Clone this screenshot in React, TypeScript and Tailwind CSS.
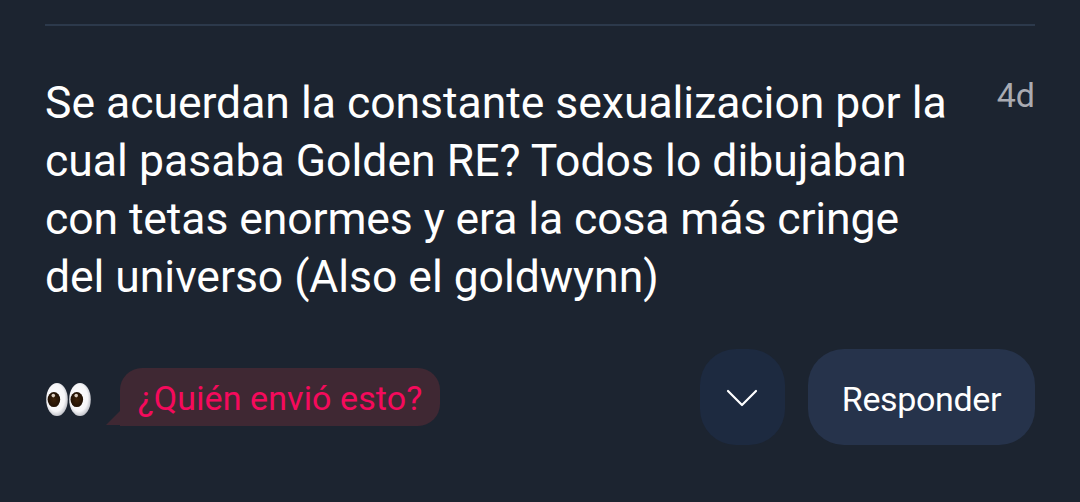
function Eyes() {
  return (
    <svg width="46" height="36" viewBox="0 0 46 36" aria-hidden="true">
      <defs>
        <radialGradient id="ball" cx="0.45" cy="0.45" r="0.58">
          <stop offset="0" stopColor="#ffffff" />
          <stop offset="0.7" stopColor="#f6f6f8" />
          <stop offset="1" stopColor="#b9bbc2" />
        </radialGradient>
        <radialGradient id="pupil" cx="0.5" cy="0.5" r="0.55">
          <stop offset="0" stopColor="#3d2209" />
          <stop offset="1" stopColor="#1e0f03" />
        </radialGradient>
      </defs>
      <ellipse cx="12" cy="17.5" rx="10.8" ry="16.6" fill="url(#ball)" />
      <ellipse cx="35" cy="17.5" rx="10.8" ry="16.6" fill="url(#ball)" />
      <ellipse cx="8.9" cy="17.6" rx="6.3" ry="7.5" fill="url(#pupil)" />
      <ellipse cx="31.8" cy="17.6" rx="6.3" ry="7.5" fill="url(#pupil)" />
      <circle cx="8.3" cy="13.6" r="1.8" fill="#d8cbbd" />
      <circle cx="31.2" cy="13.6" r="1.8" fill="#d8cbbd" />
    </svg>
  );
}

export default function App() {
  return (
    <main className="h-[502px] w-[1080px] overflow-hidden bg-[#1c2430] px-[45px] pt-6 font-[Roboto,sans-serif] text-white">
      <hr className="h-0.5 border-0 bg-[#2c394b]" />
      <div className="mt-12 flex items-start justify-between">
        <p className="text-[44.5px] leading-[58px] whitespace-nowrap">
          <span className="block tracking-[-0.03px]">Se acuerdan la constante sexualizacion por la</span>
          <span className="block tracking-[0.02px]">cual pasaba Golden RE? Todos lo dibujaban</span>
          <span className="block tracking-[-0.1px]">con tetas enormes y era la cosa más cringe</span>
          <span className="block tracking-[-0.05px]">del universo (Also el goldwynn)</span>
        </p>
        <time className="text-[34px] leading-[42px] text-[#a9abb2]">4d</time>
      </div>
      <div className="mt-[43px] flex h-24 items-center">
        <div className="flex items-center">
          <div className="pt-[5px]">
            <Eyes />
          </div>
          <div className="ml-[15px] flex items-end">
            <svg className="mb-px" width="14" height="14" viewBox="0 0 14 14" aria-hidden="true">
              <path d="M14 0V14H0Z" fill="#3f2833" />
            </svg>
            <div className="flex h-[58px] w-[320px] items-center justify-center rounded-tl-[22px] rounded-r-[22px] bg-[#3f2833] pt-0.5 text-[34px] leading-[42px] whitespace-nowrap tracking-[0.1px] text-[#f50a5c]">
              ¿Quién envió esto?
            </div>
          </div>
        </div>
        <button className="ml-auto flex h-24 w-[85px] items-center justify-center rounded-[36px] bg-[#1d2a40]" aria-label="Más">
          <svg className="mt-0.5 mr-0.5" width="34" height="20" viewBox="0 0 34 20" fill="none" stroke="#fff" strokeWidth="2.2" strokeLinecap="round" strokeLinejoin="round">
            <path d="M3 3L17 17L31 3" />
          </svg>
        </button>
        <button className="ml-[23px] flex h-24 w-[227px] items-center justify-center rounded-[36px] bg-[#26334b] pt-1 text-[34px] leading-[42px] tracking-[-0.35px]">
          Responder
        </button>
      </div>
    </main>
  );
}
